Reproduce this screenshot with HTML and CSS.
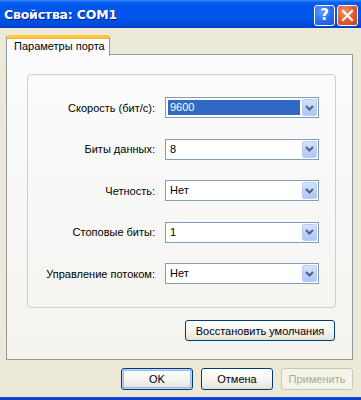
FILE: index.html
```html
<!DOCTYPE html>
<html lang="ru">
<head>
<meta charset="utf-8">
<link rel="stylesheet" href="styles.css">
</head>
<body>
<div class="window">
  <div class="titlebar">
    <span class="title">Свойства: COM1</span>
    <div class="tbuttons">
      <div class="tbtn help">?</div>
      <div class="tbtn close">
        <svg width="13" height="13" viewBox="0 0 13 13"><path d="M2 2 L11 11 M11 2 L2 11" stroke="#fff" stroke-width="2.2" stroke-linecap="square"/></svg>
      </div>
    </div>
  </div>
  <div class="content">
    <div class="tabs"><div class="tab">Параметры порта</div></div>
    <div class="panel">
      <div class="group">
        <div class="row"><span class="lbl">Скорость (бит/с):</span><div class="combo"><span class="val sel">9600</span><span class="drop"><svg width="9" height="6" viewBox="0 0 9 6"><path d="M1 1 L4.5 4.5 L8 1" stroke="#4D6185" stroke-width="2" fill="none"/></svg></span></div></div>
        <div class="row"><span class="lbl">Биты данных:</span><div class="combo"><span class="val">8</span><span class="drop"><svg width="9" height="6" viewBox="0 0 9 6"><path d="M1 1 L4.5 4.5 L8 1" stroke="#4D6185" stroke-width="2" fill="none"/></svg></span></div></div>
        <div class="row"><span class="lbl">Четность:</span><div class="combo"><span class="val">Нет</span><span class="drop"><svg width="9" height="6" viewBox="0 0 9 6"><path d="M1 1 L4.5 4.5 L8 1" stroke="#4D6185" stroke-width="2" fill="none"/></svg></span></div></div>
        <div class="row"><span class="lbl">Стоповые биты:</span><div class="combo"><span class="val">1</span><span class="drop"><svg width="9" height="6" viewBox="0 0 9 6"><path d="M1 1 L4.5 4.5 L8 1" stroke="#4D6185" stroke-width="2" fill="none"/></svg></span></div></div>
        <div class="row"><span class="lbl">Управление потоком:</span><div class="combo"><span class="val">Нет</span><span class="drop"><svg width="9" height="6" viewBox="0 0 9 6"><path d="M1 1 L4.5 4.5 L8 1" stroke="#4D6185" stroke-width="2" fill="none"/></svg></span></div></div>
      </div>
      <div class="restore-row"><button class="btn restore">Восстановить умолчания</button></div>
    </div>
    <div class="footer">
      <button class="btn def">OK</button>
      <button class="btn">Отмена</button>
      <button class="btn dis">Применить</button>
    </div>
  </div>
  <div class="bottomframe"></div>
</div>
</body>
</html>
```
FILE: styles.css
```css
* { box-sizing: border-box; }
html, body { margin: 0; padding: 0; }
body {
  width: 361px;
  height: 400px;
  overflow: hidden;
  background: #ECE9D8;
  font-family: "Liberation Sans", Arial, sans-serif;
  font-size: 11px;
  color: #000;
}
.window {
  display: flex;
  flex-direction: column;
  height: 400px;
}
.titlebar {
  height: 28px;
  flex: none;
  display: flex;
  align-items: center;
  justify-content: space-between;
  padding: 0 3px 0 4px;
  background: linear-gradient(to bottom, #3D8DFF 0px, #0A62F2 2px, #0055E8 6px, #0057EC 16px, #004BDC 24px, #0040C8 28px);
}
.title {
  color: #fff;
  font-family: "DejaVu Sans", sans-serif;
  font-weight: bold;
  font-size: 12.5px;
  letter-spacing: -0.2px;
  text-shadow: 1px 1px 0 #0A1E8C;
  margin-top: 1px;
}
.tbuttons {
  display: flex;
  gap: 2px;
  margin-top: 2px;
}
.tbtn {
  width: 21px;
  height: 21px;
  border: 1px solid #fff;
  border-radius: 3px;
  display: flex;
  align-items: center;
  justify-content: center;
}
.help {
  background: radial-gradient(circle at 35% 30%, #5C9BFF 0, #2A6BF0 55%, #1B50D8 100%);
  color: #fff;
  font-family: "DejaVu Sans", sans-serif;
  font-weight: bold;
  font-size: 15px;
}
.close {
  background: radial-gradient(circle at 35% 30%, #F0906A 0, #E2582F 55%, #C83C18 100%);
}
.content {
  flex: 1;
  display: flex;
  flex-direction: column;
  padding: 7px 8px 0 6px;
}
.tabs {
  display: flex;
  height: 20px;
  position: relative;
  z-index: 1;
  margin-bottom: -1px;
}
.tab {
  width: 104px;
  height: 21px;
  background: #FCFCFE;
  border-top: 3px solid #FFC83C;
  border-left: 1px solid #919B9C;
  border-right: 1px solid #919B9C;
  border-radius: 3px 3px 0 0;
  box-shadow: inset 0 1px 0 #F4B040;
  padding: 2px 0 0 7px;
  white-space: nowrap;
}
.panel {
  height: 306px;
  border: 1px solid #919B9C;
  background: linear-gradient(to bottom, #FCFCFE, #F4F3EE);
  display: flex;
  flex-direction: column;
  padding: 19px 16px 0 20px;
}
.group {
  height: 234px;
  border: 1px solid #D0D0BF;
  border-radius: 4px;
  display: flex;
  flex-direction: column;
  gap: 20.6px;
  padding: 22px 16px 0 0;
}
.row {
  display: flex;
  justify-content: flex-end;
  align-items: center;
  gap: 10px;
  height: 21px;
}
.lbl {
  white-space: nowrap;
}
.combo {
  width: 154px;
  height: 21px;
  border: 1px solid #7F9DB9;
  background: #fff;
  display: flex;
  align-items: center;
  padding: 1px;
}
.val {
  flex: 1;
  height: 17px;
  line-height: 17px;
  padding-left: 3px;
  margin-right: 2px;
}
.val.sel {
  background: #316AC5;
  color: #fff;
  margin-left: 1px;
  padding-left: 2px;
  height: 15px;
  line-height: 15px;
}
.drop {
  width: 15px;
  height: 17px;
  border: 1px solid #B9CDF6;
  border-radius: 2px;
  background: linear-gradient(to bottom, #D6E3FD, #BCCFF8 60%, #B0C6F6);
  display: flex;
  align-items: center;
  justify-content: center;
}
.restore-row {
  display: flex;
  justify-content: flex-end;
  margin-top: 12px;
  padding-right: 1px;
}
.btn {
  font-family: "Liberation Sans", Arial, sans-serif;
  font-size: 11px;
  color: #000;
  height: 21px;
  border: 1px solid #003C74;
  border-radius: 3px;
  background: linear-gradient(to bottom, #FFFFFF 0, #F4F3EE 60%, #E3E0D6 100%);
  padding: 0;
  display: flex;
  align-items: center;
  justify-content: center;
}
.restore {
  width: 150px;
}
.footer {
  display: flex;
  justify-content: flex-end;
  gap: 8px;
  margin-top: 8px;
}
.footer .btn {
  width: 72px;
  height: 22px;
}
.btn.def {
  box-shadow: inset 0 0 0 1px #C0D3F8, inset 0 0 0 2px #98B8EA;
}
.btn.dis {
  border-color: #C9C7BA;
  background: #F5F4EA;
  color: #ACA899;
}
.bottomframe {
  height: 3px;
  margin-top: 6px;
  background: linear-gradient(to bottom, #1A50E0, #0836C6);
}
```
